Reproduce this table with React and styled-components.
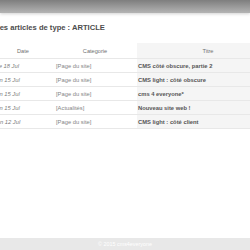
import React from "react";
import styled, { createGlobalStyle } from "styled-components";

const rows = [
  { date: "Le 18 Jul", category: "[Page du site]", title: "CMS côté obscure, partie 2" },
  { date: "Lun 15 Jul", category: "[Page du site]", title: "CMS light : côté obscure" },
  { date: "Lun 15 Jul", category: "[Page du site]", title: "cms 4 everyone*" },
  { date: "Lun 15 Jul", category: "[Actualités]", title: "Nouveau site web !" },
  { date: "Ven 12 Jul", category: "[Page du site]", title: "CMS light : côté client" },
];

const GlobalStyle = createGlobalStyle`
  html, body {
    margin: 0;
    padding: 0;
    background: #ffffff;
    overflow: hidden;
  }
  body {
    font-family: "Liberation Sans", Arial, sans-serif;
  }
`;

const App = () => {
  return (
    <>
      <GlobalStyle />
      <StyledPage>
        <TopBar />
        <Main>
          <Title>Les articles de type : ARTICLE</Title>
          <Table>
            <colgroup>
              <col style={{ width: 60 }} />
              <col style={{ width: 84 }} />
              <col style={{ width: 142 }} />
            </colgroup>
            <thead>
              <tr>
                <Head>Date</Head>
                <Head>Categorie</Head>
                <Head $shaded>Titre</Head>
              </tr>
            </thead>
            <tbody>
              {rows.map((row, i) => (
                <Row key={i}>
                  <DateCell>{row.date}</DateCell>
                  <CategoryCell>{row.category}</CategoryCell>
                  <TitleCell>{row.title}</TitleCell>
                </Row>
              ))}
            </tbody>
          </Table>
        </Main>
        <Footer>© 2015 cms4everyone</Footer>
      </StyledPage>
    </>
  );
};

const StyledPage = styled.div`
  width: 250px;
  height: 250px;
  display: flex;
  flex-direction: column;
  overflow: hidden;
`;

const TopBar = styled.div`
  height: 13px;
  flex-shrink: 0;
  background: linear-gradient(#7e7e7e, #b4b4b4);
  box-shadow: 0 1px 3px rgba(0, 0, 0, 0.18);
  position: relative;
  z-index: 1;
`;

const Main = styled.div`
  flex: 1;
  margin-left: -7px;
`;

const Title = styled.h1`
  margin: 10px 0 10px 2px;
  font-size: 7.6px;
  line-height: 10px;
  font-weight: 700;
  color: #4d4d4d;
  white-space: nowrap;
`;

const Table = styled.table`
  width: 286px;
  table-layout: fixed;
  border-collapse: collapse;
`;

const Head = styled.th`
  height: 15px;
  padding: 0;
  font-size: 5.6px;
  font-weight: 400;
  color: #707070;
  text-align: center;
  background: ${(p) => (p.$shaded ? "#f5f5f5" : "#ffffff")};
  border-bottom: 1px solid #e8e8e8;
`;

const Row = styled.tr`
  height: 14px;
  border-bottom: 1px solid #e8e8e8;
`;

const cell = `
  padding: 0;
  font-size: 5.8px;
  white-space: nowrap;
  overflow: hidden;
`;

const DateCell = styled.td`
  ${cell}
  padding-right: 34px;
  text-align: right;
  font-style: italic;
  color: #7a7a7a;
`;

const CategoryCell = styled.td`
  ${cell}
  padding-left: 3px;
  color: #858585;
`;

const TitleCell = styled.td`
  ${cell}
  padding-left: 1px;
  font-weight: 700;
  color: #555555;
  background: #f5f5f5;
`;

const Footer = styled.div`
  height: 12px;
  flex-shrink: 0;
  background: #e8e8e8;
  color: #ffffff;
  font-size: 5.4px;
  line-height: 12px;
  text-align: center;
`;

export default App;
